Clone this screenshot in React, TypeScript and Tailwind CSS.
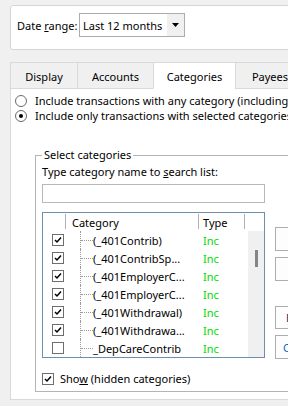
import React from "react";

const rows = [
  { name: "(_401Contrib)", checked: true },
  { name: "(_401ContribSp...", checked: true },
  { name: "(_401EmployerC...", checked: true },
  { name: "(_401EmployerC...", checked: true },
  { name: "(_401Withdrawal)", checked: true },
  { name: "(_401Withdrawa...", checked: true },
  { name: "_DepCareContrib", checked: false },
];

function CheckBox({ checked }: { checked: boolean }) {
  return (
    <span className="w-[12px] h-[12px] border border-[#6e6e6e] bg-white flex items-center justify-center shrink-0">
      {checked && (
        <svg width="10" height="10" viewBox="0 0 10 10">
          <path d="M2 5 L4 7 L8 2.5" stroke="#000" strokeWidth="1.5" fill="none" />
        </svg>
      )}
    </span>
  );
}

function Radio({ checked, label }: { checked: boolean; label: string }) {
  return (
    <div className="h-[15px] flex items-center whitespace-nowrap">
      <span className="ml-[4px] w-[12px] h-[12px] rounded-full border border-[#6a6a6a] bg-white flex items-center justify-center shrink-0">
        {checked && <span className="w-[4px] h-[4px] rounded-full bg-black" />}
      </span>
      <span className="ml-[8px]">{label}</span>
    </div>
  );
}

export default function App() {
  return (
    <div className="w-[288px] h-[406px] overflow-hidden bg-[#f0f0f0] font-['Noto_Sans',sans-serif] text-[11px] leading-[15px] text-black">
      {/* Date range box */}
      <div className="ml-[10px] mt-[5px] w-[300px] h-[45px] bg-white border border-[#d5d5d5] rounded-[3px] flex items-start pt-[7px] pl-[6px]">
        <div className="w-[62px] h-[24px] flex items-center whitespace-nowrap shrink-0">
          <span>
            Date <span className="underline">r</span>ange:
          </span>
        </div>
        <div className="w-[106px] h-[24px] border border-[#acacac] bg-white flex shrink-0">
          <div className="flex-1 flex items-center pl-[3px] whitespace-nowrap">Last 12 months</div>
          <div className="w-[17px] bg-[#f0f0f0] flex items-center justify-center">
            <svg width="7" height="4" viewBox="0 0 7 4">
              <path d="M0 0 H7 L3.5 4 Z" fill="#000" />
            </svg>
          </div>
        </div>
      </div>

      {/* Tabs */}
      <div className="mt-[12px] ml-[10px] w-[320px] flex h-[27px]">
        <div className="w-[67px] shrink-0 border-l border-t border-b border-[#d9d9d9] bg-[#f0f0f0] flex items-center justify-center pt-[2px]">Display</div>
        <div className="w-[76px] shrink-0 border-l border-t border-b border-[#d9d9d9] bg-[#f0f0f0] flex items-center justify-center pt-[2px]">Accounts</div>
        <div className="w-[82px] shrink-0 border-l border-t border-b border-[#d9d9d9] border-b-white bg-white flex items-center justify-center pt-[2px]">Categories</div>
        <div className="w-[70px] shrink-0 border-l border-t border-r border-b border-[#d9d9d9] bg-[#f0f0f0] flex items-center justify-center pt-[2px]">Payees</div>
        <div className="flex-1 border-b border-[#d9d9d9]" />
      </div>

      {/* Panel */}
      <div className="ml-[10px] w-[320px] bg-white border-l border-r border-b border-[#d9d9d9] pt-[4px] pb-[7px]">
        <Radio checked={false} label="Include transactions with any category (including uncategorized)" />
        <Radio checked={true} label="Include only transactions with selected categories:" />

        <fieldset className="ml-[24px] mt-[24px] w-[300px] border border-[#b4b4b4] pl-[6px] pb-[5px]">
          <legend className="px-[2px] leading-[16px]">Select categories</legend>
          <div className="mt-[1px] whitespace-nowrap">
            Type category name to <span className="underline">s</span>earch list:
          </div>
          <div className="mt-[5px] w-[223px] h-[19px] border border-[#b8b8b8] bg-white" />

          <div className="mt-[9px] flex items-start">
            {/* List */}
            <div className="w-[223px] h-[146px] shrink-0 border border-[#6f8eae] bg-white flex flex-col">
              <div className="h-[18px] flex items-start shrink-0">
                <div className="w-[22px] shrink-0" />
                <div className="mt-[1px] w-px h-[15px] bg-[#b0b0b0] shrink-0" />
                <div className="w-[132px] h-[18px] shrink-0 flex items-center pl-[6px]">Category</div>
                <div className="mt-[1px] w-px h-[15px] bg-[#b0b0b0] shrink-0" />
                <div className="w-[45px] h-[18px] shrink-0 flex items-center pl-[4px]">Type</div>
                <div className="mt-[1px] w-px h-[15px] bg-[#b0b0b0] shrink-0" />
              </div>
              <div className="flex flex-1">
                <div className="w-[205px] shrink-0 flex flex-col">
                  {rows.map((r, i) => (
                    <div key={i} className="h-[18px] flex items-center">
                      <div className="w-[22px] h-full shrink-0 flex items-center pl-[9px]">
                        <CheckBox checked={r.checked} />
                      </div>
                      <div className="w-[133px] h-full shrink-0 flex items-center">
                        <div className="ml-[15px] w-[13px] h-full shrink-0 border-l border-dotted border-[#9a9a9a] flex items-center">
                          <div className="w-full border-t border-dotted border-[#9a9a9a]" />
                        </div>
                        <span className="whitespace-nowrap">{r.name}</span>
                      </div>
                      <div className="w-[46px] shrink-0 pl-[5px] text-[#00dc00]">Inc</div>
                    </div>
                  ))}
                </div>
                <div className="w-[16px] shrink-0 bg-[#f0f0f0] pl-[7px] pt-[19px]">
                  <div className="w-[3px] h-[17px] bg-[#858585]" />
                </div>
              </div>
            </div>

            {/* Buttons */}
            <div className="ml-[10px] flex flex-col shrink-0">
              <div className="mt-[15px] w-[80px] h-[24px] border border-[#adadad] bg-[#fdfdfd]" />
              <div className="mt-[6px] w-[80px] h-[24px] border border-[#adadad] bg-[#fdfdfd]" />
              <div className="mt-[25px] w-[80px] h-[23px] border border-[#adadad] bg-[#fdfdfd] flex items-center pl-[10px] whitespace-nowrap text-[#3b2a6e]">Expand all</div>
              <div className="mt-[6px] w-[80px] h-[24px] border border-[#adadad] bg-[#fdfdfd] flex items-center pl-[7px] whitespace-nowrap text-[#0a64c8]">Collapse all</div>
            </div>
          </div>

          <div className="mt-[12px] h-[15px] flex items-center whitespace-nowrap">
            <CheckBox checked={true} />
            <span className="ml-[6px]">
              Sho<span className="underline">w</span> (hidden categories)
            </span>
          </div>
        </fieldset>
      </div>
    </div>
  );
}
